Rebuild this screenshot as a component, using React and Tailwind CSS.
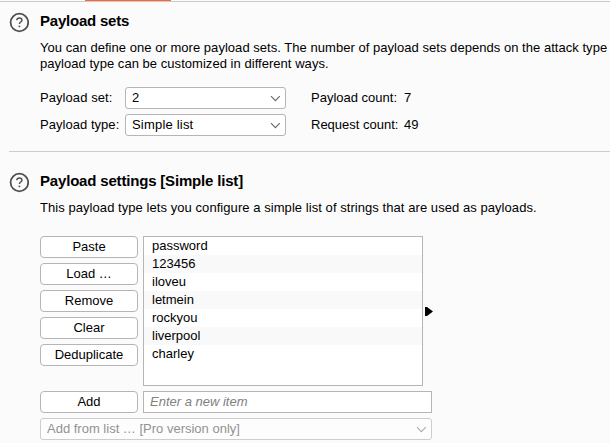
import React from "react";

function HelpIcon() {
  return (
    <svg className="block h-[21px] w-5 shrink-0" viewBox="0 0 20 21" fill="none" stroke="#505050">
      <circle cx="10.400" cy="10.500" r="8.8" strokeWidth="1.800" />
      <path d="M7.800 8.300c0-1.400 1.100-2.300 2.600-2.300s2.500 1 2.500 2.200c0 1.800-2.500 1.800-2.500 3.700" strokeWidth="1.5" />
      <path d="M10.400 13.600v1.600" strokeWidth="1.7" />
    </svg>
  );
}

function Chevron({ className }) {
  return (
    <svg className={`block h-[7px] w-[11px] shrink-0 ${className}`} viewBox="0 0 11 7" fill="none" stroke="currentColor">
      <path d="M1 1.200L5.400 5.600L9.800 1.200" strokeWidth="1.1" />
    </svg>
  );
}

function Select({ children }) {
  return (
    <div className="flex h-[22px] w-[161px] items-center justify-between rounded-[3px] border border-[#b7b4b7] bg-white pr-1 pl-1.5">
      <span className="tracking-[0.2px]">{children}</span>
      <Chevron className="text-[#666]" />
    </div>
  );
}

function Button({ children }) {
  return (
    <button className="block h-[22px] w-[98px] shrink-0 rounded-[4px] border border-[#b7b4b7] bg-white text-center leading-5">
      {children}
    </button>
  );
}

const items = ["password", "123456", "iloveu", "letmein", "rockyou", "liverpool", "charley"];
const actions = ["Paste", "Load …", "Remove", "Clear", "Deduplicate"];

export default function App() {
  return (
    <main className="h-[443px] w-[610px] overflow-hidden bg-[#fbfbfb] font-['Liberation_Sans',Arial,sans-serif] text-[13px] leading-4 whitespace-nowrap text-black">
      <div className="h-0.5 border-b border-[#c8ccc8]">
        <div className="ml-[85px] h-px w-[86px] bg-[#ff6633]" />
      </div>

      <section className="ml-[9px] flex h-[150px] gap-[11px] border-b border-[#cdcdcd] pt-[10px]">
        <HelpIcon />
        <div>
          <h2 className="h-7 text-[15px] leading-[18px] font-bold tracking-[-0.22px]">Payload sets</h2>
          <p className="tracking-[0.037px]">You can define one or more payload sets. The number of payload sets depends on the attack type</p>
          <p className="tracking-[0.04px]">payload type can be customized in different ways.</p>
          <div className="mt-[15px] grid grid-cols-[85px_186px_93px_auto] items-center gap-y-[5px]">
            <span className="tracking-[0.07px]">Payload set:</span>
            <Select>2</Select>
            <span>Payload count:</span>
            <span>7</span>
            <span className="tracking-[0.04px]">Payload type:</span>
            <Select>Simple list</Select>
            <span>Request count:</span>
            <span>49</span>
          </div>
        </div>
      </section>

      <section className="ml-[9px] flex gap-[11px] pt-5">
        <HelpIcon />
        <div>
          <h2 className="h-7 text-[15px] leading-[18px] font-bold tracking-[-0.18px]">Payload settings [Simple list]</h2>
          <p className="tracking-[0.06px]">This payload type lets you configure a simple list of strings that are used as payloads.</p>
          <div className="mt-5 flex">
            <div className="flex flex-col gap-[5px]">
              {actions.map((label) => (
                <Button key={label}>{label}</Button>
              ))}
            </div>
            <ul className="ml-[5px] h-[150px] w-[280px] border border-[#b7b4b7] bg-white">
              {items.map((item) => (
                <li key={item} className="h-[18px] pl-2 leading-[18px] even:bg-[#f9f9f9]">
                  {item}
                </li>
              ))}
            </ul>
            <svg className="mt-[71px] ml-0.5 h-[9px] w-2" viewBox="0 0 8 9">
              <path d="M0 0h2l6 4.500-6 4.500H0z" fill="#000" />
            </svg>
          </div>
          <div className="mt-[5px] flex w-[392px] gap-[5px]">
            <Button>Add</Button>
            <div className="h-[22px] flex-1 border border-[#b7b4b7] bg-white pl-1.5 leading-5 text-[#808080] italic">
              Enter a new item
            </div>
          </div>
          <div className="mt-[5px] flex h-[22px] w-[392px] items-center justify-between rounded-[3px] border border-[#cdcdcd] bg-[#fdfdfd] pr-1 pl-1.5 text-[#929292]">
            <span>Add from list … [Pro version only]</span>
            <Chevron className="text-[#aaa]" />
          </div>
        </div>
      </section>
    </main>
  );
}
